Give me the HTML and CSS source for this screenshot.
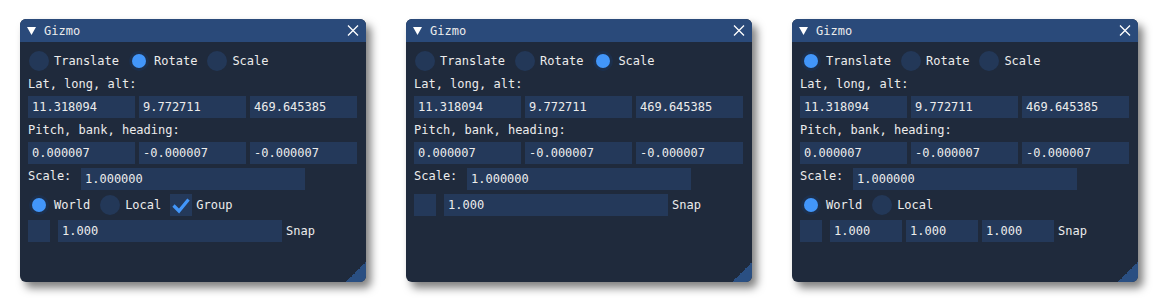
FILE: index.html
```html
<!DOCTYPE html>
<html>
<head>
<meta charset="utf-8">
<link rel="stylesheet" href="styles.css">
</head>
<body>
<div class="stage">

  <div class="win">
    <div class="title">
      <svg class="tri" width="9" height="8" viewBox="0 0 9 8"><polygon points="0,0 9,0 4.5,8" fill="#fff"/></svg>
      <span class="ttext">Gizmo</span>
      <svg class="close" width="12" height="11" viewBox="0 0 12 11"><path d="M1 0.5 L11 10.5 M11 0.5 L1 10.5" stroke="#fff" stroke-width="1.3" fill="none"/></svg>
    </div>
    <div class="content">
      <div class="row">
        <div class="opt"><span class="radio"></span><span>Translate</span></div>
        <div class="opt"><span class="radio on"></span><span>Rotate</span></div>
        <div class="opt"><span class="radio"></span><span>Scale</span></div>
      </div>
      <div class="label">Lat, long, alt:</div>
      <div class="grid3">
        <div class="field">11.318094</div>
        <div class="field">9.772711</div>
        <div class="field">469.645385</div>
      </div>
      <div class="label">Pitch, bank, heading:</div>
      <div class="grid3">
        <div class="field">0.000007</div>
        <div class="field">-0.000007</div>
        <div class="field">-0.000007</div>
      </div>
      <div class="row">
        <span class="toplabel">Scale:</span>
        <div class="field wide">1.000000</div>
      </div>
      <div class="row">
        <div class="opt"><span class="radio on"></span><span>World</span></div>
        <div class="opt"><span class="radio"></span><span>Local</span></div>
        <div class="opt"><span class="check"><svg width="22" height="22" viewBox="0 0 22 22"><path d="M3.5 11.5 L9 17 L18.5 5.5" stroke="#4296fa" stroke-width="3.2" fill="none"/></svg></span><span>Group</span></div>
      </div>
      <div class="row snaprow">
        <span class="box"></span>
        <div class="field wide">1.000</div>
        <span class="snap">Snap</span>
      </div>
    </div>
    <div class="grip"></div>
  </div>

  <div class="win">
    <div class="title">
      <svg class="tri" width="9" height="8" viewBox="0 0 9 8"><polygon points="0,0 9,0 4.5,8" fill="#fff"/></svg>
      <span class="ttext">Gizmo</span>
      <svg class="close" width="12" height="11" viewBox="0 0 12 11"><path d="M1 0.5 L11 10.5 M11 0.5 L1 10.5" stroke="#fff" stroke-width="1.3" fill="none"/></svg>
    </div>
    <div class="content">
      <div class="row">
        <div class="opt"><span class="radio"></span><span>Translate</span></div>
        <div class="opt"><span class="radio"></span><span>Rotate</span></div>
        <div class="opt"><span class="radio on"></span><span>Scale</span></div>
      </div>
      <div class="label">Lat, long, alt:</div>
      <div class="grid3">
        <div class="field">11.318094</div>
        <div class="field">9.772711</div>
        <div class="field">469.645385</div>
      </div>
      <div class="label">Pitch, bank, heading:</div>
      <div class="grid3">
        <div class="field">0.000007</div>
        <div class="field">-0.000007</div>
        <div class="field">-0.000007</div>
      </div>
      <div class="row">
        <span class="toplabel">Scale:</span>
        <div class="field wide">1.000000</div>
      </div>
      <div class="row snaprow">
        <span class="box"></span>
        <div class="field wide">1.000</div>
        <span class="snap">Snap</span>
      </div>
    </div>
    <div class="grip"></div>
  </div>

  <div class="win">
    <div class="title">
      <svg class="tri" width="9" height="8" viewBox="0 0 9 8"><polygon points="0,0 9,0 4.5,8" fill="#fff"/></svg>
      <span class="ttext">Gizmo</span>
      <svg class="close" width="12" height="11" viewBox="0 0 12 11"><path d="M1 0.5 L11 10.5 M11 0.5 L1 10.5" stroke="#fff" stroke-width="1.3" fill="none"/></svg>
    </div>
    <div class="content">
      <div class="row">
        <div class="opt"><span class="radio on"></span><span>Translate</span></div>
        <div class="opt"><span class="radio"></span><span>Rotate</span></div>
        <div class="opt"><span class="radio"></span><span>Scale</span></div>
      </div>
      <div class="label">Lat, long, alt:</div>
      <div class="grid3">
        <div class="field">11.318094</div>
        <div class="field">9.772711</div>
        <div class="field">469.645385</div>
      </div>
      <div class="label">Pitch, bank, heading:</div>
      <div class="grid3">
        <div class="field">0.000007</div>
        <div class="field">-0.000007</div>
        <div class="field">-0.000007</div>
      </div>
      <div class="row">
        <span class="toplabel">Scale:</span>
        <div class="field wide">1.000000</div>
      </div>
      <div class="row">
        <div class="opt"><span class="radio on"></span><span>World</span></div>
        <div class="opt"><span class="radio"></span><span>Local</span></div>
      </div>
      <div class="row snaprow">
        <span class="box"></span>
        <div class="field small">1.000</div>
        <div class="field small">1.000</div>
        <div class="field small">1.000</div>
        <span class="snap">Snap</span>
      </div>
    </div>
    <div class="grip"></div>
  </div>

</div>
</body>
</html>
```

FILE: styles.css
```css
html, body {
  margin: 0;
  padding: 0;
  background: #ffffff;
}

.stage {
  display: flex;
  gap: 40px;
  padding: 19px 20px;
  font-family: "DejaVu Sans Mono", "Liberation Mono", monospace;
  font-size: 12px;
  color: #ececec;
}

.win {
  position: relative;
  width: 346px;
  height: 263px;
  background: #1f2a3c;
  border-radius: 6px;
  overflow: hidden;
  box-shadow: 5px 6px 9px rgba(0, 0, 0, 0.5);
  flex: none;
}

.title {
  height: 23px;
  background: #2a4a7a;
  display: flex;
  align-items: center;
  padding: 0 7px;
}

.tri {
  margin-top: 1px;
  flex: none;
}

.ttext {
  margin-left: 8px;
  line-height: 16px;
}

.close {
  margin-left: auto;
  flex: none;
}

.content {
  padding: 8px 9px 0 8px;
  display: flex;
  flex-direction: column;
  gap: 4px;
}

.row {
  height: 22px;
  display: flex;
  align-items: center;
  gap: 9px;
}

.opt {
  display: flex;
  align-items: center;
  gap: 4px;
  height: 22px;
  line-height: 16px;
}

.radio {
  width: 20px;
  height: 20px;
  margin: 1px;
  border-radius: 50%;
  background: #233858;
  display: flex;
  align-items: center;
  justify-content: center;
  flex: none;
}

.radio.on {
  background: #1c2f4c;
}

.radio.on::after {
  content: "";
  width: 14px;
  height: 14px;
  border-radius: 50%;
  background: #4296fa;
}

.check {
  width: 22px;
  height: 22px;
  background: #24395a;
  display: block;
  flex: none;
}

.check svg {
  display: block;
}

.label {
  height: 16px;
  line-height: 16px;
}

.grid3 {
  display: grid;
  grid-template-columns: repeat(3, 107px);
  gap: 4px;
  height: 22px;
}

.field {
  height: 22px;
  line-height: 22px;
  background: #24395a;
  padding-left: 4px;
  box-sizing: border-box;
}

.toplabel {
  align-self: flex-start;
  line-height: 16px;
  width: 44px;
}

.field.wide {
  width: 224px;
}

.field.small {
  width: 72px;
}

.snaprow {
  gap: 4px;
}

.box {
  width: 22px;
  height: 22px;
  background: #24395a;
  margin-right: 4px;
  flex: none;
}

.snap {
  line-height: 16px;
}

.grip {
  position: absolute;
  right: 0;
  bottom: 0;
  width: 20px;
  height: 20px;
  background: linear-gradient(to bottom right, transparent 50%, #2a4f82 50%);
}
```
